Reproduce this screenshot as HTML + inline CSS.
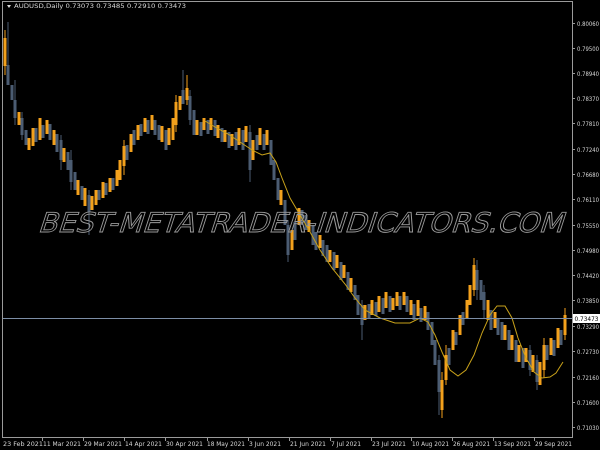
<!DOCTYPE html>
<html><head><meta charset="utf-8"><style>
html,body{margin:0;padding:0;background:#000;width:600px;height:450px;overflow:hidden}
svg{display:block}
text{font-family:"DejaVu Sans","Liberation Sans",sans-serif;font-size:6.5px;fill:#d8d8d8}
</style></head><body>
<svg width="600" height="450" viewBox="0 0 600 450" xmlns="http://www.w3.org/2000/svg">
<rect width="600" height="450" fill="#000"/>
<path stroke="#4b5c72" stroke-width="3" fill="none" d="M8 65V85M12 85V100M15 100V118M22 118V135M26 130V145M36 128V142M43 125V138M50 124V140M57 134V152M61 140V160M68 152V170M71 160V182M75 172V190M82 186V200M89 195V212M99 190V200M106 183V195M113 178V190M127 145V160M134 130V145M141 124V136M148 120V134M155 120V135M159 125V140M166 130V150M183 90V104M190 96V120M194 110V135M201 122V136M208 120V134M215 120V136M222 128V142M229 132V148M236 132V150M243 130V150M250 132V170M257 135V150M264 134V150M271 140V165M274 160V180M278 178V200M285 200V225M288 225V255M295 222V240M302 210V225M306 215V230M313 225V245M316 232V250M323 240V256M327 245V262M334 252V270M341 262V280M348 272V290M355 285V300M358 295V315M362 305V325M369 304V318M376 302V316M383 298V314M390 296V312M400 296V310M407 296V312M414 304V320M421 308V322M428 312V330M432 322V345M435 340V365M439 360V392M449 348V365M456 332V345M463 312V325M477 270V290M481 280V300M484 292V310M491 310V330M498 318V335M502 322V340M509 330V350M516 340V362M523 348V368M530 350V370M537 360V382M547 345V360M554 340V356M561 330V345"/>
<path stroke="#4b5c72" stroke-width="1" fill="none" d="M8 22V65M15 80V125M22 112V140M61 135V170M71 150V190M89 190V235M183 70V104M190 90V125M250 125V182M288 220V262M362 300V340M439 355V415M477 260V300M484 285V318M530 345V376M537 355V390"/>
<path stroke="#f3a11c" stroke-width="3" fill="none" d="M5 38V66M19 112V125M29 138V150M33 128V146M40 118V140M47 120V134M54 130V145M64 148V162M78 180V195M85 188V206M92 196V210M96 190V205M103 182V198M110 178V192M117 170V186M120 160V180M124 146V166M131 134V152M138 125V140M145 118V132M152 115V130M162 126V142M169 128V145M173 118V140M176 102V125M180 96V110M187 88V100M197 120V135M204 118V130M211 118V130M218 125V138M225 130V142M232 134V146M239 128V145M246 126V142M253 140V160M260 128V145M267 130V145M281 190V205M292 230V250M299 208V225M309 220V232M320 235V248M330 250V262M337 255V268M344 265V278M351 278V292M365 305V320M372 300V315M379 296V312M386 292V308M393 298V310M397 292V306M404 292V305M411 300V315M418 300V316M425 306V320M442 380V410M446 355V380M453 330V350M460 315V335M467 300V318M470 285V305M474 265V290M488 300V320M495 312V328M505 325V340M512 335V350M519 345V362M526 348V362M533 355V372M540 362V385M544 345V370M551 338V355M558 328V348M565 315V335"/>
<path stroke="#f3a11c" stroke-width="1" fill="none" d="M5 30V75M124 140V175M176 95V132M187 75V105M442 372V418M446 345V385M474 258V296M544 338V378M565 308V340"/>
<polyline fill="none" stroke="#c9a21a" stroke-width="1" points="205,121 215,127 228,134 240,142 252,150 262,155 270,153 276,162 282,178 290,198 300,215 310,232 320,250 332,268 345,284 355,298 365,310 380,318 395,323 410,323 420,318 428,322 435,335 442,352 450,370 458,376 466,370 474,355 482,333 490,315 497,306 505,306 512,318 518,338 526,358 534,372 542,378 550,377 556,373 563,362"/>
<line x1="3" y1="318.5" x2="572" y2="318.5" stroke="#7c8ea6" stroke-width="1"/>
<g transform="translate(300,232)"><text x="0" y="0" text-anchor="middle" textLength="525" lengthAdjust="spacingAndGlyphs" transform="skewX(-18)" style="font-size:27px;fill:none;stroke:#9a9a9a;stroke-width:0.9">BEST-METATRADER-INDICATORS.COM</text></g>
<path d="M2.5 1.5H572.5V437.5H2.5Z" fill="none" stroke="#9a9a9a" stroke-width="1"/>
<polygon points="7,5 11,5 9,8" fill="#ddd"/>
<text x="14" y="8" textLength="172" lengthAdjust="spacingAndGlyphs">AUDUSD,Daily  0.73073 0.73485 0.72910 0.73473</text>
<g stroke="#9a9a9a">
<path d="M572 23.5h3M572 48.5h3M572 73.5h3M572 98.5h3M572 123.5h3M572 149.5h3M572 174.5h3M572 199.5h3M572 225.5h3M572 250.5h3M572 275.5h3M572 300.5h3M572 326.5h3M572 351.5h3M572 377.5h3M572 402.5h3M572 427.5h3"/>
<path d="M42.5 437v4M83.5 437v4M124.5 437v4M165.5 437v4M207.5 437v4M248.5 437v4M289.5 437v4M330.5 437v4M371.5 437v4M411.5 437v4M452.5 437v4M493.5 437v4M534.5 437v4"/>
</g>
<g>
<text x="577" y="26" textLength="22" lengthAdjust="spacingAndGlyphs">0.80060</text>
<text x="577" y="51" textLength="22" lengthAdjust="spacingAndGlyphs">0.79500</text>
<text x="577" y="76" textLength="22" lengthAdjust="spacingAndGlyphs">0.78940</text>
<text x="577" y="101" textLength="22" lengthAdjust="spacingAndGlyphs">0.78370</text>
<text x="577" y="126" textLength="22" lengthAdjust="spacingAndGlyphs">0.77810</text>
<text x="577" y="152" textLength="22" lengthAdjust="spacingAndGlyphs">0.77240</text>
<text x="577" y="177" textLength="22" lengthAdjust="spacingAndGlyphs">0.76680</text>
<text x="577" y="202" textLength="22" lengthAdjust="spacingAndGlyphs">0.76110</text>
<text x="577" y="228" textLength="22" lengthAdjust="spacingAndGlyphs">0.75550</text>
<text x="577" y="253" textLength="22" lengthAdjust="spacingAndGlyphs">0.74980</text>
<text x="577" y="278" textLength="22" lengthAdjust="spacingAndGlyphs">0.74420</text>
<text x="577" y="303" textLength="22" lengthAdjust="spacingAndGlyphs">0.73850</text>
<text x="577" y="329" textLength="22" lengthAdjust="spacingAndGlyphs">0.73290</text>
<text x="577" y="354" textLength="22" lengthAdjust="spacingAndGlyphs">0.72730</text>
<text x="577" y="380" textLength="22" lengthAdjust="spacingAndGlyphs">0.72160</text>
<text x="577" y="405" textLength="22" lengthAdjust="spacingAndGlyphs">0.71600</text>
<text x="577" y="430" textLength="22" lengthAdjust="spacingAndGlyphs">0.71030</text>
</g>
<g>
<text x="3" y="446" textLength="40" lengthAdjust="spacingAndGlyphs">23 Feb 2021</text>
<text x="43" y="446" textLength="38" lengthAdjust="spacingAndGlyphs">11 Mar 2021</text>
<text x="84" y="446" textLength="38" lengthAdjust="spacingAndGlyphs">29 Mar 2021</text>
<text x="125" y="446" textLength="37" lengthAdjust="spacingAndGlyphs">14 Apr 2021</text>
<text x="166" y="446" textLength="37" lengthAdjust="spacingAndGlyphs">30 Apr 2021</text>
<text x="207" y="446" textLength="38" lengthAdjust="spacingAndGlyphs">18 May 2021</text>
<text x="249" y="446" textLength="32" lengthAdjust="spacingAndGlyphs">3 Jun 2021</text>
<text x="290" y="446" textLength="36" lengthAdjust="spacingAndGlyphs">21 Jun 2021</text>
<text x="331" y="446" textLength="30" lengthAdjust="spacingAndGlyphs">7 Jul 2021</text>
<text x="372" y="446" textLength="34" lengthAdjust="spacingAndGlyphs">23 Jul 2021</text>
<text x="412" y="446" textLength="37" lengthAdjust="spacingAndGlyphs">10 Aug 2021</text>
<text x="453" y="446" textLength="37" lengthAdjust="spacingAndGlyphs">26 Aug 2021</text>
<text x="494" y="446" textLength="37" lengthAdjust="spacingAndGlyphs">13 Sep 2021</text>
<text x="535" y="446" textLength="37" lengthAdjust="spacingAndGlyphs">29 Sep 2021</text>
</g>
<rect x="573" y="314" width="27" height="9" fill="#fff"/>
<text x="574.5" y="321" style="fill:#000" textLength="24" lengthAdjust="spacingAndGlyphs">0.73473</text>
</svg>
</body></html>
